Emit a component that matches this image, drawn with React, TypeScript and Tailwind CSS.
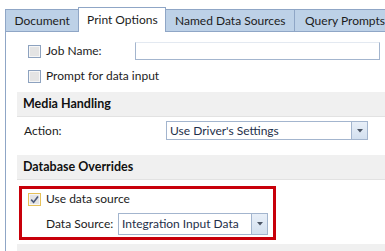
import React from 'react';

type CheckProps = { checked?: boolean; focused?: boolean };

function CheckBox({ checked, focused }: CheckProps) {
  return (
    <span
      className={
        'flex h-[13px] w-[13px] shrink-0 items-center justify-center border bg-[#e4e4e4] shadow-[inset_0_0_0_1px_#f6f6f6] ' +
        (focused ? 'border-[#e6c158]' : 'border-[#8da2bf]')
      }
    >
      {checked && (
        <svg width="9" height="9" viewBox="0 0 9 9">
          <path d="M1.2 4.6 L3.6 7.2 L8 1.4" fill="none" stroke="#4a5878" strokeWidth="1.6" />
        </svg>
      )}
    </span>
  );
}

function Combo({ value, className }: { value: string; className: string }) {
  return (
    <div className={'flex border border-[#a3b5ce] bg-white ' + className}>
      <span className="flex flex-1 items-center pl-[3px] text-[#1e2f4a]">{value}</span>
      <span className="flex w-[16px] items-center justify-center border-l border-[#a3b5ce] bg-gradient-to-b from-[#e8eff8] to-[#d3e0ef]">
        <svg width="6" height="4" viewBox="0 0 6 4">
          <path d="M0 0 H6 L3 3.5 Z" fill="#4b5565" />
        </svg>
      </span>
    </div>
  );
}

function SectionHeader({ title }: { title: string }) {
  return (
    <div className="flex h-[25px] items-center border-b border-[#e2e2e2] bg-[#f0f0f0] pl-[6px] text-[12.5px] font-bold text-[#111]">
      {title}
    </div>
  );
}

export default function App() {
  return (
    <div className="h-[251px] w-[385px] overflow-hidden bg-white text-[12px] leading-none text-[#1c1c1c] [font-family:Lato,'Noto_Sans',sans-serif]">
      <div className="flex h-[32px] items-end pl-[5px]">
        <div className="flex h-[23px] w-[74px] items-center justify-center border-y border-l border-[#8fa6c6] bg-[#bdd1e7]">
          Document
        </div>
        <div className="flex h-[25px] w-[89px] items-center justify-center border-x border-t border-[#8fa6c6] bg-white">
          Print Options
        </div>
        <div className="flex h-[23px] w-[129px] items-center justify-center border-y border-[#8fa6c6] bg-[#bdd1e7]">
          Named Data Sources
        </div>
        <div className="flex h-[23px] flex-1 items-center justify-start whitespace-nowrap border-y border-l border-[#8fa6c6] bg-[#bdd1e7] pl-[10px]">
          Query Prompts
        </div>
      </div>

      <div className="ml-[5px] flex h-[219px] flex-col border-l border-[#8fa6c6]">
        <div className="mt-[10px] flex h-[18px] items-center pl-[22px] pr-[5px]">
          <CheckBox />
          <span className="ml-[5px] w-[89px]">Job Name:</span>
          <div className="h-full flex-1 border border-[#a3b5ce] border-t-[#e3e9f1]" />
        </div>
        <div className="mt-[7px] flex h-[18px] items-center pl-[22px]">
          <CheckBox />
          <span className="ml-[5px]">Prompt for data input</span>
        </div>

        <div className="ml-[11px] mt-[7px] flex flex-1 flex-col">
          <SectionHeader title="Media Handling" />
          <div className="mt-[4px] flex h-[19px] items-center pl-[7px]">
            <span className="w-[142px]">Action:</span>
            <Combo value="Use Driver's Settings" className="h-full w-[202px]" />
          </div>

          <div className="mt-[15px]">
            <SectionHeader title="Database Overrides" />
          </div>
          <div className="ml-[2px] mt-[6px] flex h-[54px] w-[257px] flex-col border-[3px] border-[#c8000a]">
            <div className="mt-[2px] flex h-[16px] items-center pl-[6px]">
              <CheckBox checked focused />
              <span className="ml-[5px]">Use data source</span>
            </div>
            <div className="mt-[6px] flex h-[22px] items-center pl-[24px]">
              <span className="w-[72px]">Data Source:</span>
              <Combo value="Integration Input Data" className="h-full w-[150px]" />
            </div>
          </div>
          <div className="mt-[4px] flex-1 bg-[#f0f0f0]" />
        </div>
      </div>
    </div>
  );
}
